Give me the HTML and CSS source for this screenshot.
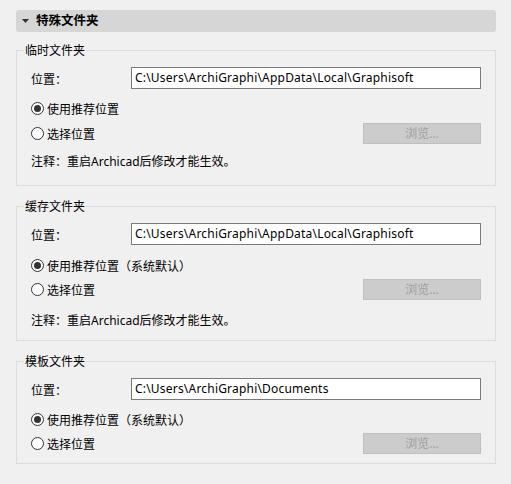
FILE: index.html
```html
<!DOCTYPE html>
<html lang="zh-CN">
<head>
<meta charset="utf-8">
<title>特殊文件夹</title>
<link rel="stylesheet" href="styles.css">
</head>
<body>
<div class="panel">
  <div class="header">
    <svg class="caret" width="7" height="4" viewBox="0 0 7 4"><path d="M0 0H7L3.5 4Z" fill="#333"/></svg>
    <span class="title">特殊文件夹</span>
  </div>

  <fieldset class="group g1">
    <legend>临时文件夹</legend>
    <div class="row path-row">
      <span class="label">位置：</span>
      <div class="input">C:\Users\ArchiGraphi\AppData\Local\Graphisoft</div>
    </div>
    <div class="row radio-row r1">
      <span class="radio checked"></span><span>使用推荐位置</span>
    </div>
    <div class="row radio-row r2">
      <span class="radio"></span><span>选择位置</span>
      <button class="browse" disabled>浏览...</button>
    </div>
    <div class="note">注释：重启Archicad后修改才能生效。</div>
  </fieldset>

  <fieldset class="group g2">
    <legend>缓存文件夹</legend>
    <div class="row path-row">
      <span class="label">位置：</span>
      <div class="input">C:\Users\ArchiGraphi\AppData\Local\Graphisoft</div>
    </div>
    <div class="row radio-row r1">
      <span class="radio checked"></span><span>使用推荐位置（系统默认）</span>
    </div>
    <div class="row radio-row r2">
      <span class="radio"></span><span>选择位置</span>
      <button class="browse" disabled>浏览...</button>
    </div>
    <div class="note">注释：重启Archicad后修改才能生效。</div>
  </fieldset>

  <fieldset class="group g3">
    <legend>模板文件夹</legend>
    <div class="row path-row">
      <span class="label">位置：</span>
      <div class="input">C:\Users\ArchiGraphi\Documents</div>
    </div>
    <div class="row radio-row r1">
      <span class="radio checked"></span><span>使用推荐位置（系统默认）</span>
    </div>
    <div class="row radio-row r2">
      <span class="radio"></span><span>选择位置</span>
      <button class="browse" disabled>浏览...</button>
    </div>
  </fieldset>
</div>
</body>
</html>
```

FILE: styles.css
```css
html, body {
  margin: 0;
  padding: 0;
  background: #f0f0f0;
}
body {
  font-family: "Noto Sans", "Noto Sans CJK SC", sans-serif;
  font-size: 12px;
  color: #000;
  width: 511px;
  height: 484px;
  overflow: hidden;
}
.panel {
  margin-left: 16px;
  padding-top: 10px;
  width: 480px;
  display: flex;
  flex-direction: column;
}
.header {
  height: 22px;
  background: #d6d6d6;
  border-radius: 3px;
  display: flex;
  align-items: center;
}
.caret {
  margin-left: 6px;
  margin-right: 7px;
}
.title {
  font-weight: bold;
  line-height: 16px;
  font-size: 12.5px;
}
.group {
  margin: 10px 0 0 0;
  padding: 0 14px 15px 14px;
  border: 1px solid #dcdcdc;
  min-width: 0;
  display: flex;
  flex-direction: column;
}
.group + .group { margin-top: 12px; }
legend {
  margin-left: -7px;
  padding: 0 1px;
  line-height: 16px;
  font-family: "Noto Sans CJK SC", sans-serif;
}
.row {
  display: flex;
  align-items: center;
}
.path-row {
  margin-top: 9px;
  height: 22px;
}
.label {
  width: 100px;
  font-family: "Noto Sans CJK SC", sans-serif;
}
.input {
  box-sizing: border-box;
  width: 350px;
  height: 22px;
  border: 1px solid #7a7a7a;
  background: #fff;
  padding: 0 3px;
  line-height: 20px;
  letter-spacing: 0.2px;
  white-space: nowrap;
  overflow: hidden;
}
.radio-row {
  height: 20px;
}
.r1 { margin-top: 9px; }
.r2 { margin-top: 5px; }
.g2 .r1 { margin-top: 10px; }
.g2 .r2 { margin-top: 4px; }
.g2 .note { margin-top: 14px; }
.g2 { padding-bottom: 11px; }
.g3 .r2 { margin-top: 4px; }
.g3 { padding-bottom: 10px; }
.radio {
  box-sizing: border-box;
  width: 13px;
  height: 13px;
  border: 1px solid #333;
  border-radius: 50%;
  background: #fff;
  margin-right: 3px;
  display: flex;
  align-items: center;
  justify-content: center;
}
.radio.checked::after {
  content: "";
  width: 7px;
  height: 7px;
  border-radius: 50%;
  background: #333;
}
.radio-row span {
  font-family: "Noto Sans CJK SC", sans-serif;
}
.browse {
  margin-left: auto;
  box-sizing: border-box;
  width: 118px;
  height: 21px;
  border: 1px solid #bfbfbf;
  background: #cccccc;
  color: #a0a0a0;
  font: inherit;
  font-size: 12px;
  padding: 0;
}
.note {
  margin-top: 11px;
  line-height: 16px;
  font-family: "Noto Sans", "Noto Sans CJK SC", sans-serif;
}
```
